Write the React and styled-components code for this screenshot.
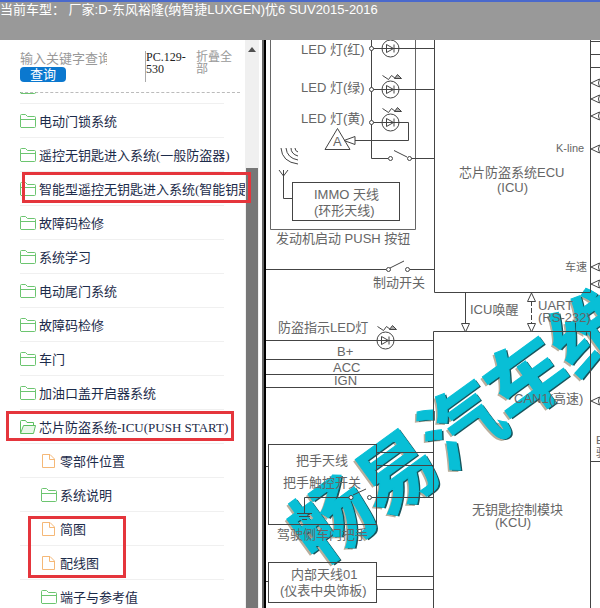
import { useState } from "react";
import styled, { createGlobalStyle } from "styled-components";

const treeItems = [
  { id: 0, type: "folder", label: "" },
  { id: 1, type: "folder", label: "电动门锁系统" },
  { id: 2, type: "folder", label: "遥控无钥匙进入系统(一般防盗器)" },
  { id: 3, type: "folder", label: "智能型遥控无钥匙进入系统(智能钥匙" },
  { id: 4, type: "folder", label: "故障码检修" },
  { id: 5, type: "folder", label: "系统学习" },
  { id: 6, type: "folder", label: "电动尾门系统" },
  { id: 7, type: "folder", label: "故障码检修" },
  { id: 8, type: "folder", label: "车门" },
  { id: 9, type: "folder", label: "加油口盖开启器系统" },
  { id: 10, type: "open", label: "芯片防盗系统-ICU(PUSH START)" },
  { id: 11, type: "file", label: "零部件位置", child: true },
  { id: 12, type: "folder", label: "系统说明", child: true },
  { id: 13, type: "file", label: "简图", child: true },
  { id: 14, type: "file", label: "配线图", child: true },
  { id: 15, type: "folder", label: "端子与参考值", child: true },
];

const FolderIcon = () => (
  <svg width="17" height="16" viewBox="0 0 17 16" fill="none" stroke="#6cc570">
    <path d="M.5 14V2.500Q.5 1.500 1.500 1.500H5.500L7.500 3.500H14.500Q15.500 3.500 15.500 4.500V13.500Q15.500 14.500 14.500 14.500H1Z" />
    <path d="M1 6.500H15.500" />
  </svg>
);

const OpenFolderIcon = () => (
  <svg width="17" height="16" viewBox="0 0 17 16" fill="none" stroke="#5cbf60">
    <path d="M.5 14V2.500Q.5 1.500 1.500 1.500H5.500L7 3.500H13.500V6" />
    <path d="M.5 14.500L3.500 6.500H15.500L13.500 14.500Z" fill="#e9f8e9" />
  </svg>
);

const FileIcon = () => (
  <svg width="15" height="16" viewBox="0 0 15 16" fill="none" stroke="#f5b877">
    <path d="M1.500 1.500H9L13.500 6V14.500H1.500Z" />
    <path d="M8.500 1.500V6.500H13.500" />
  </svg>
);

const icons = { folder: FolderIcon, open: OpenFolderIcon, file: FileIcon };

const Led = ({ x, y }) => (
  <g>
    <circle cx={x} cy={y} r="8.5" />
    <path d={`M${x - 4} ${y - 4}L${x + 3} ${y}L${x - 4} ${y + 4}ZM${x + 3.5} ${y - 4}v8`} />
    <path d={`M${x - 8} ${y - 14}l6 4l3 -4l4 3l2 -1`} />
    <path d={`M${x + 4} ${y - 11}l3 -4l4 4Z`} fill="#aaa" />
  </g>
);

const Pin = ({ y }) => (
  <path d={`M591 ${y}L599.5 ${y - 4}Q597.5 ${y} 599.5 ${y + 4}Z`} />
);

const Diagram = () => (
  <Drawing viewBox="266 40 334 568" role="img" aria-label="ICU 简图">
    <g fontSize="80" fontWeight="700">
      <text transform="translate(315 569) rotate(-36)" fill="#b9ae9c">畅易汽车维</text>
      <text transform="translate(319 568) rotate(-36)" fill="#17545c">畅易汽车维</text>
      <text
        transform="translate(317 567) rotate(-36)"
        fill="#08bfd6"
        stroke="#08bfd6"
      >
        畅易汽车维
      </text>
    </g>

    <g fill="none" stroke="#444">
      <path d="M270.5 40V229.5H415.5V40" stroke="#666" />
      <path d="M434.5 40V292.5H590.5V40" />
      <path d="M433.5 608V331.5H590.5V608" />
      <path d="M371.5 40V158.5H388" />
      <path d="M371 48.5H434M371 89.5H434M371 122.5H408.5V140.5H355" />
      <path d="M411 158.5H434M394 150.5L407 157" />
      <path d="M337.5 128.5L325 149.5H350ZM344 140.5L355 136.5V144.5Z" />
      <path d="M295 148Q295 151 298 152M291 148Q291 154 298 156M286 148Q287 158 298 160M281 148Q282 162 298 164" />
      <path d="M279 170L283.5 176L288 170M283.5 170V198.5H292" />
      <rect x="292.5" y="182.5" width="107" height="38" />
      <path d="M266 269.5H386M390 268L404 261M410 269.5H434" />
      <path d="M266 340.5H433M266 359.5H433M266 374.5H433M266 387.5H433" />
      <rect x="268.5" y="444.5" width="108" height="80" />
      <path d="M266 466.5H268M376 452.5H433M376 465.5H433" />
      <path d="M304.5 513V497.5H349M353 495L366 489M372 497.5H433" />
      <path d="M297 513.5H312M299 516.5H310M302 519.5H307" />
      <rect x="268.5" y="562.5" width="108" height="40" />
      <path d="M266 581.5H268M376 576.5H433M376 589.5H433" />
      <path d="M465.5 292V324M461.5 323.5H469.5L465.5 332Z" />
      <path d="M531.5 301V323" strokeDasharray="5 2" />
      <path d="M527.5 301.5H535.5L531.5 293ZM527.5 323.5H535.5L531.5 332Z" />
      <path d="M591 41.5H600M591 54.5H600M591 67.5H600M591 461.5H600" />
      <Pin y={83} />
      <Pin y={99} />
      <Pin y={116} />
      <Pin y={149} />
      <Pin y={267} />
      <Pin y={284} />
      <Pin y={401} />
      <Led x={390.5} y={48.5} />
      <Led x={390.5} y={89.5} />
      <Led x={390.5} y={122.5} />
      <Led x={385.5} y={340.5} />
      <g fill="#fff">
        <circle cx="371.5" cy="48.5" r="2" />
        <circle cx="371.5" cy="89.5" r="2" />
        <circle cx="371.5" cy="122.5" r="2" />
        <circle cx="390.5" cy="158.5" r="2" />
        <circle cx="409.5" cy="158.5" r="2" />
        <circle cx="388.5" cy="269.5" r="2" />
        <circle cx="407.5" cy="269.5" r="2" />
        <circle cx="351" cy="497.5" r="2" />
        <circle cx="369.5" cy="497.5" r="2" />
      </g>
    </g>

    <g fontSize="13" fill="#666">
      <text x="301" y="54">LED 灯(红)</text>
      <text x="301" y="92">LED 灯(绿)</text>
      <text x="301" y="123">LED 灯(黄)</text>
      <text x="333" y="146">A</text>
      <text x="314" y="199">IMMO 天线</text>
      <text x="314" y="215">(环形天线)</text>
      <text x="276" y="243">发动机启动 PUSH 按钮</text>
      <text x="373" y="287">制动开关</text>
      <text x="459" y="177">芯片防盗系统ECU</text>
      <text x="497" y="192">(ICU)</text>
      <text x="278" y="332">防盗指示LED灯</text>
      <text x="337" y="356">B+</text>
      <text x="333" y="372">ACC</text>
      <text x="334" y="385">IGN</text>
      <text x="470" y="314">ICU唤醒</text>
      <text x="538" y="310">UART</text>
      <text x="538" y="322">(RS-232)</text>
      <text x="514" y="403">CAN1(高速)</text>
      <text x="296" y="465">把手天线</text>
      <text x="283" y="487">把手触控开关</text>
      <text x="277" y="539">驾驶侧车门把手</text>
      <text x="291" y="579">内部天线01</text>
      <text x="280" y="595">(仪表中央饰板)</text>
      <text x="472" y="514">无钥匙控制模块</text>
      <text x="495" y="527">(KCU)</text>
    </g>
    <g fontSize="11" fill="#666">
      <text x="556" y="152">K-line</text>
      <text x="565" y="271">车速</text>
      <text x="596" y="444">E</text>
      <text x="596" y="457">驱</text>
    </g>
  </Drawing>
);

const App = () => {
  const [keyword, setKeyword] = useState("");

  return (
    <Page>
      <GlobalStyle />
      <Header>当前车型： 厂家:D-东风裕隆(纳智捷LUXGEN)优6 SUV2015-2016</Header>
      <Main>
        <Sidebar>
          <Content>
            <SearchBar onSubmit={(e) => e.preventDefault()}>
              <SearchField>
                <SearchInput
                  aria-label="关键字"
                  placeholder="输入关键字查询"
                  value={keyword}
                  onChange={(e) => setKeyword(e.target.value)}
                />
                <SearchButton type="submit">查询</SearchButton>
              </SearchField>
              <Code>PC.129-530</Code>
              <CollapseLink href="#">折叠全部</CollapseLink>
            </SearchBar>
            <TreeView>
              <Tree>
                {treeItems.map((item) => {
                  const Icon = icons[item.type];
                  return (
                    <TreeItem key={item.id} $child={item.child}>
                      <TreeLink href="#" $file={item.type === "file"}>
                        <Icon />
                        {item.label}
                      </TreeLink>
                    </TreeItem>
                  );
                })}
              </Tree>
            </TreeView>
          </Content>
          <Scrollbar>
            <ScrollArrow viewBox="0 0 8 5">
              <path d="M4 0L8 5H0Z" fill="#505050" />
            </ScrollArrow>
            <Thumb />
          </Scrollbar>
          <Mark $top={132} $left={22} $width={229} $height={31} />
          <Mark $top={371} $left={6} $width={228} $height={30} />
          <Mark $top={476} $left={28} $width={98} $height={62} />
        </Sidebar>
        <Viewer>
          <Diagram />
        </Viewer>
      </Main>
    </Page>
  );
};

const GlobalStyle = createGlobalStyle`
  * {
    box-sizing: border-box;
  }
  body {
    margin: 0;
    background: #fff;
  }
`;

const Page = styled.div`
  display: flex;
  flex-direction: column;
  height: 100vh;
  overflow: hidden;
  font-family: "Liberation Serif", "Noto Sans CJK SC", serif;
  font-size: 13px;
`;

const Header = styled.header`
  flex: 0 0 40px;
  border-top: 2px solid #4a69cc;
  background: #999;
  color: #fff;
  font-family: "Liberation Sans", "Noto Sans CJK SC", sans-serif;
  line-height: 15px;
  white-space: nowrap;
`;

const Main = styled.main`
  display: flex;
  flex: 1;
  min-height: 0;
`;

const Sidebar = styled.aside`
  position: relative;
  display: flex;
  flex: 0 0 264px;
  border-right: 2px solid #666;
`;

const Content = styled.div`
  display: flex;
  flex: 1;
  flex-direction: column;
  min-width: 0;
`;

const SearchBar = styled.form`
  display: flex;
  flex: 0 0 53px;
  margin: 0 5px 0 20px;
  padding-top: 11px;
  border-bottom: 1px dashed #bbb;
  font-size: 12px;
  line-height: 12px;
`;

const SearchField = styled.div`
  display: flex;
  flex: 0 0 125px;
  flex-direction: column;
  align-items: flex-start;
`;

const SearchInput = styled.input`
  width: 87px;
  height: 16px;
  padding: 0;
  border: 0;
  outline: 0;
  background: transparent;
  font-family: inherit;
  font-size: 13px;

  &::placeholder {
    color: #999;
  }
`;

const SearchButton = styled.button`
  width: 46px;
  height: 15px;
  padding: 0;
  border: 0;
  border-radius: 4px;
  background: #0b78cf;
  color: #fff;
  font-family: inherit;
  font-size: 13px;
  line-height: 15px;
  cursor: pointer;
`;

const Code = styled.span`
  flex: 0 0 51px;
  height: 31px;
  border-left: 1px solid #aaa;
  color: #222;
`;

const CollapseLink = styled.a`
  width: 36px;
  color: #999;
  text-decoration: none;
`;

const TreeView = styled.nav`
  flex: 1;
  min-height: 0;
  margin-top: -1px;
  overflow: hidden;
`;

/* the list is scrolled so its first row is mostly hidden */
const Tree = styled.ul`
  margin: -22px 0 0;
  padding: 0 0 0 20px;
  list-style: none;
`;

const TreeItem = styled.li`
  width: 204px;
  height: 34px;
  padding-left: ${({ $child }) => ($child ? "21px" : "0")};
  border-bottom: 1px solid #f0f0f0;
`;

const TreeLink = styled.a`
  display: flex;
  align-items: center;
  gap: ${({ $file }) => ($file ? "4px" : "2px")};
  height: 33px;
  color: #1c2b4a;
  text-decoration: none;
  white-space: nowrap;

  svg {
    flex: none;
  }
`;

const Scrollbar = styled.div`
  display: flex;
  flex: 0 0 14px;
  flex-direction: column;
  align-items: center;
  margin-right: 3px;
  background: #f0f0f0;
`;

const ScrollArrow = styled.svg`
  flex: none;
  width: 8px;
  height: 5px;
  margin: 7px 0 116px;
`;

const Thumb = styled.div`
  flex: 1;
  width: 12px;
  background: #777;
`;

const Mark = styled.div`
  position: absolute;
  top: ${({ $top }) => $top}px;
  left: ${({ $left }) => $left}px;
  width: ${({ $width }) => $width}px;
  height: ${({ $height }) => $height}px;
  border: 3px solid #e5353c;
  pointer-events: none;
`;

const Viewer = styled.section`
  flex: 1;
  min-width: 0;
  overflow: hidden;
  border-left: 2px solid #000;
  background: #fff;
`;

const Drawing = styled.svg`
  display: block;
  width: 334px;
  height: 568px;
  font-family: "Liberation Sans", "Noto Sans CJK SC", sans-serif;
`;

export default App;
